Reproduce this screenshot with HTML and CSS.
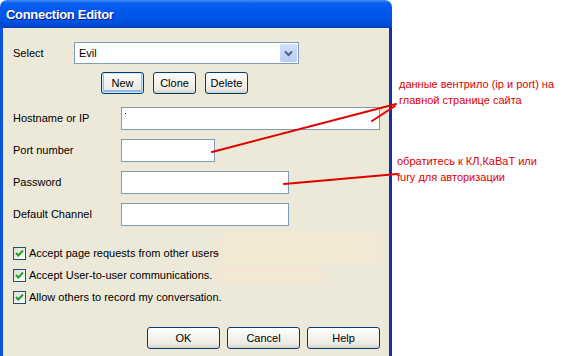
FILE: index.html
```html
<!DOCTYPE html>
<html>
<head>
<meta charset="utf-8">
<link rel="stylesheet" href="styles.css">
</head>
<body>
<div class="page">
  <div class="window">
    <div class="titlebar">Connection Editor</div>
    <div class="client">
      <div class="select-row">
        <span class="label select-label">Select</span>
        <div class="combo">
          <span class="combo-text">Evil</span>
          <span class="combo-btn">
            <svg width="9" height="7" viewBox="0 0 9 7"><path d="M1 1.5 L4.5 5 L8 1.5" fill="none" stroke="#4d6185" stroke-width="2"/></svg>
          </span>
        </div>
      </div>
      <div class="tool-row">
        <button class="btn btn-default">New</button>
        <button class="btn">Clone</button>
        <button class="btn">Delete</button>
      </div>
      <div class="form">
        <span class="label">Hostname or IP</span>
        <div class="field w-host"><span class="dot"></span></div>
        <span class="label">Port number</span>
        <div class="field w-port"></div>
        <span class="label">Password</span>
        <div class="field w-pass"></div>
        <span class="label">Default Channel</span>
        <div class="field w-pass"></div>
      </div>
      <div class="checks">
        <div class="check-row"><span class="cb"><svg width="11" height="11" viewBox="0 0 11 11"><path d="M2 5 L4.3 7.5 L9 2.5" fill="none" stroke="#21a121" stroke-width="2"/></svg></span><span class="label">Accept page requests from other users</span></div>
        <div class="check-row"><span class="cb"><svg width="11" height="11" viewBox="0 0 11 11"><path d="M2 5 L4.3 7.5 L9 2.5" fill="none" stroke="#21a121" stroke-width="2"/></svg></span><span class="label">Accept User-to-user communications.</span></div>
        <div class="check-row"><span class="cb"><svg width="11" height="11" viewBox="0 0 11 11"><path d="M2 5 L4.3 7.5 L9 2.5" fill="none" stroke="#21a121" stroke-width="2"/></svg></span><span class="label">Allow others to record my conversation.</span></div>
      </div>
      <div class="action-row">
        <button class="btn btn-wide">OK</button>
        <button class="btn btn-wide">Cancel</button>
        <button class="btn btn-wide">Help</button>
      </div>
    </div>
  </div>

  <div class="smudge smudge-a"></div>
  <div class="smudge smudge-b"></div>

  <svg class="marks" width="564" height="356" viewBox="0 0 564 356">
    <g stroke="#e00000" stroke-width="2" fill="none" stroke-linecap="round">
      <path d="M212 152 L396 104"/>
      <path d="M372 121 L395 106"/>
      <path d="M284 184 L397 174"/>
    </g>
    <path d="M213 253 L219 254" stroke="#a02020" stroke-width="1"/>
  </svg>

  <div class="note note-a">данные вентрило (ip и port) на<br>главной странице сайта</div>
  <div class="note note-b">обратитесь к КЛ,КаВаТ или<br>fury для авторизации</div>
</div>
</body>
</html>
```

FILE: styles.css
```css
html, body {
  margin: 0;
  padding: 0;
  background: #ffffff;
  width: 564px;
  height: 356px;
  overflow: hidden;
}

.page {
  position: relative;
  width: 564px;
  height: 356px;
  font-family: "Liberation Sans", Arial, sans-serif;
  font-size: 11px;
  color: #000;
}

.window {
  width: 392px;
  height: 356px;
  display: flex;
  flex-direction: column;
}

.titlebar {
  height: 28px;
  box-sizing: border-box;
  padding: 7px 0 0 6px;
  border-radius: 7px 7px 0 0;
  background: linear-gradient(to bottom, #3d8cf5 0%, #0a5ff0 12%, #0058ee 35%, #0055e5 70%, #0049d0 92%, #003fb8 100%);
  color: #fff;
  font-weight: bold;
  font-size: 13px;
  letter-spacing: -0.3px;
  text-shadow: 1px 1px 0 #0a1e8c;
}

.client {
  flex: 1;
  background: #ece9d8;
  border-left: 3px solid #0b54e0;
  border-right: 3px solid #1430a8;
  padding: 14px 9px 0 10px;
  display: flex;
  flex-direction: column;
}

.label {
  white-space: nowrap;
  line-height: 13px;
}

.select-row {
  display: flex;
  align-items: center;
  height: 22px;
}

.select-label {
  width: 61px;
}

.combo {
  width: 225px;
  height: 22px;
  box-sizing: border-box;
  border: 1px solid #7f9db9;
  background: #fff;
  display: flex;
  align-items: center;
  justify-content: space-between;
  padding: 0 1px 0 4px;
}

.combo-btn {
  width: 17px;
  height: 18px;
  border-radius: 2px;
  background: linear-gradient(to bottom, #d2e0fd, #b6cbf7);
  display: flex;
  align-items: center;
  justify-content: center;
}

.tool-row {
  display: flex;
  gap: 9px;
  margin-top: 8px;
  padding-left: 88px;
}

.btn {
  font-family: "Liberation Sans", Arial, sans-serif;
  font-size: 11px;
  color: #000;
  height: 22px;
  width: 43px;
  padding: 0;
  border: 1px solid #003c74;
  border-radius: 3px;
  background: linear-gradient(to bottom, #ffffff 0%, #f4f3ee 40%, #ecebe4 80%, #d6d0c5 100%);
}

.btn-default {
  box-shadow: inset 0 0 0 1px #cee7ff, inset 0 -1px 0 2px #98b8ea;
}

.form {
  display: grid;
  grid-template-columns: 108px auto;
  row-gap: 9px;
  margin-top: 13px;
  align-items: center;
  justify-items: start;
}

.field {
  height: 23px;
  box-sizing: border-box;
  border: 1px solid #7f9db9;
  background: #fff;
  position: relative;
}

.w-host { width: 259px; }
.w-port { width: 94px; }
.w-pass { width: 168px; }

.dot {
  position: absolute;
  left: 3px;
  top: 5px;
  width: 1px;
  height: 1px;
  background: #000;
}

.checks {
  display: flex;
  flex-direction: column;
  gap: 9px;
  margin-top: 21px;
}

.check-row {
  display: flex;
  align-items: center;
  gap: 3px;
  height: 13px;
}

.cb {
  width: 13px;
  height: 13px;
  box-sizing: border-box;
  border: 1px solid #1c5180;
  background: linear-gradient(135deg, #dcdcd7, #ffffff);
  display: flex;
  align-items: center;
  justify-content: center;
}

.action-row {
  display: flex;
  justify-content: flex-end;
  gap: 7px;
  margin-top: 23px;
}

.btn-wide {
  width: 73px;
}

.smudge {
  position: absolute;
  background: #fde7cf;
  opacity: 0.45;
  border-radius: 6px;
}

.smudge-a {
  left: 220px;
  top: 232px;
  width: 162px;
  height: 32px;
}

.smudge-b {
  left: 216px;
  top: 266px;
  width: 108px;
  height: 18px;
}

.marks {
  position: absolute;
  left: 0;
  top: 0;
}

.note {
  position: absolute;
  color: #e00000;
  font-family: "Liberation Sans", Arial, sans-serif;
  font-size: 11px;
  line-height: 16px;
  white-space: nowrap;
}

.note-a {
  left: 399px;
  top: 76px;
}

.note-b {
  left: 397px;
  top: 153px;
}
```
